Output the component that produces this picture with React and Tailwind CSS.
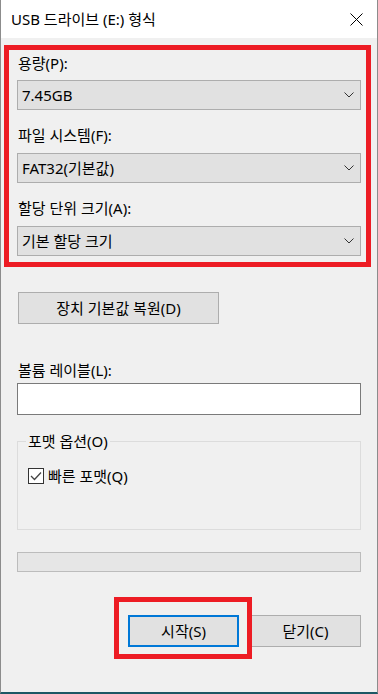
import React from "react";

const FONT = { fontFamily: '"Noto Sans", "Noto Sans CJK KR", sans-serif' };

function Chevron() {
  return (
    <svg width="10" height="6" viewBox="0 0 10 6" className="shrink-0">
      <polyline points="0.5,0.5 5,5 9.5,0.5" fill="none" stroke="#333" strokeWidth="1" />
    </svg>
  );
}

function Combo({ value, className = "" }) {
  return (
    <div className={`h-[30px] bg-[#e1e1e1] border border-[#adadad] flex items-center justify-between pl-[4px] pr-[6px] ${className}`}>
      <span className="text-[15px] leading-none text-black">{value}</span>
      <Chevron />
    </div>
  );
}

function Label({ children, className = "" }) {
  return <div className={`h-[20px] flex items-center text-[15px] leading-none text-black ${className}`}>{children}</div>;
}

export default function App() {
  return (
    <div
      className="relative w-[378px] h-[694px] bg-[#f0f0f0] border-x border-[#8c8c8c] border-b-2 border-b-[#1d5865] flex flex-col overflow-hidden"
      style={FONT}
    >
      <div className="h-[38px] bg-white flex items-center justify-between pl-[10px] pr-[14px] shrink-0">
        <span className="text-[15px] leading-none text-black">USB 드라이브 (E:) 형식</span>
        <svg width="13" height="13" viewBox="0 0 13 13">
          <path d="M0.5 0.5 L12.5 12.5 M12.5 0.5 L0.5 12.5" stroke="#000" strokeWidth="1" fill="none" />
        </svg>
      </div>

      <div className="flex flex-col px-[16px]">
        <Label className="mt-[15px] pl-[1px]">용량(P):</Label>
        <Combo value="7.45GB" className="mt-[7px]" />
        <Label className="mt-[15px] pl-[1px]">파일 시스템(F):</Label>
        <Combo value="FAT32(기본값)" className="mt-[8px]" />
        <Label className="mt-[15px] pl-[1px]">할당 단위 크기(A):</Label>
        <Combo value="기본 할당 크기" className="mt-[8px]" />

        <button className="mt-[36px] ml-[1px] w-[201px] h-[32px] bg-[#e1e1e1] border border-[#adadad] flex items-center justify-center text-[15px] leading-none text-black">
          장치 기본값 복원(D)
        </button>

        <Label className="mt-[36px] pl-[1px]">볼륨 레이블(L):</Label>
        <div className="mt-[3px] h-[32px] bg-white border border-[#7a7a7a]"></div>

        <div className="relative mt-[26px] h-[89px] border border-[#dcdcdc] pt-[24px] pl-[10px]">
          <span className="absolute -top-[11px] left-[8px] px-[2px] h-[20px] flex items-center bg-[#f0f0f0] text-[15px] leading-none text-black">
            포맷 옵션(O)
          </span>
          <div className="flex items-center gap-[4px] h-[20px]">
            <div className="w-[16px] h-[16px] bg-white border border-[#333] flex items-center justify-center">
              <svg width="12" height="10" viewBox="0 0 12 10">
                <polyline points="1,5 4.5,8.5 11,1.5" fill="none" stroke="#444" strokeWidth="1.3" />
              </svg>
            </div>
            <span className="text-[15px] leading-none text-black">빠른 포맷(Q)</span>
          </div>
        </div>

        <div className="mt-[22px] h-[20px] bg-[#e6e6e6] border border-[#bcbcbc]"></div>

        <div className="mt-[43px] flex justify-end gap-[11px]">
          <button className="w-[111px] h-[32px] bg-[#e1e1e1] border-2 border-[#0078d7] flex items-center justify-center text-[15px] leading-none text-black">
            시작(S)
          </button>
          <button className="w-[111px] h-[32px] bg-[#e1e1e1] border border-[#adadad] flex items-center justify-center text-[15px] leading-none text-black">
            닫기(C)
          </button>
        </div>
      </div>

      <div className="absolute left-[3px] top-[45px] w-[367px] h-[222px] border-[5px] border-[#ed1c24] pointer-events-none"></div>
      <div className="absolute left-[113px] top-[597px] w-[138px] h-[62px] border-[5px] border-[#ed1c24] pointer-events-none"></div>
    </div>
  );
}
